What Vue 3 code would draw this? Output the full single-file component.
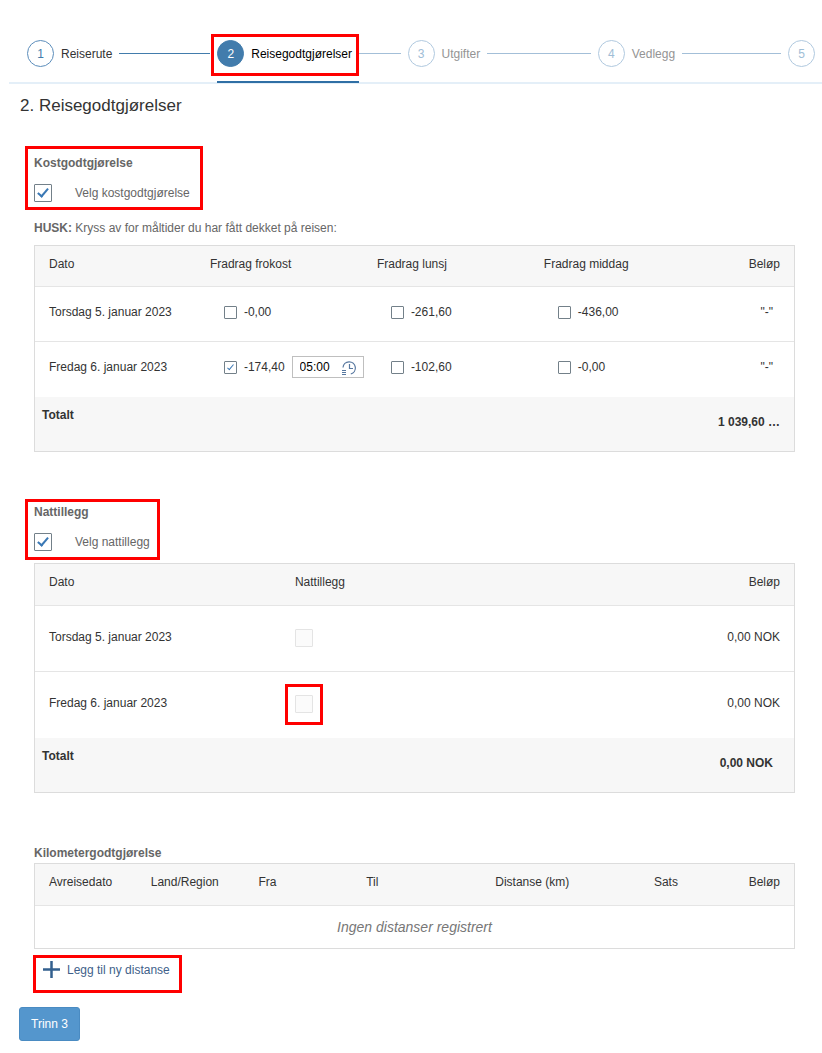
<template>
  <main class="page">
    <nav class="stepper" aria-label="Trinn">
      <div
        v-for="step in steps"
        :key="step.nr"
        class="step"
        :class="{ active: step.nr === current, upcoming: step.nr > current }"
      >
        <div class="step-head">
          <span class="step-nr">{{ step.nr }}</span>
          <span v-if="step.label" class="step-label">{{ step.label }}</span>
        </div>
        <span v-if="step.label" class="step-line"></span>
      </div>
    </nav>

    <h1>2. Reisegodtgjørelser</h1>

    <section class="block">
      <div class="choice marked mark-meals">
        <h2>Kostgodtgjørelse</h2>
        <label class="toggle">
          <input v-model="useMeals" type="checkbox" class="check" />
          <span>Velg kostgodtgjørelse</span>
        </label>
      </div>
      <p class="hint"><b>HUSK:</b> Kryss av for måltider du har fått dekket på reisen:</p>
      <table class="meals">
        <colgroup>
          <col class="w-date" />
          <col class="w-meal" />
          <col class="w-meal" />
          <col class="w-meal" />
          <col />
        </colgroup>
        <thead>
          <tr>
            <th>Dato</th>
            <th>Fradrag frokost</th>
            <th>Fradrag lunsj</th>
            <th>Fradrag middag</th>
            <th class="right">Beløp</th>
          </tr>
        </thead>
        <tbody>
          <tr v-for="day in mealDays" :key="day.date">
            <td>{{ day.date }}</td>
            <td v-for="meal in day.meals" :key="meal.name" class="meal">
              <div class="meal-cell">
                <label class="meal-label">
                  <input v-model="meal.checked" type="checkbox" class="check small" />
                  <span>{{ meal.amount }}</span>
                </label>
                <span v-if="meal.time" class="time">
                  <input v-model="meal.time" type="text" aria-label="Klokkeslett" />
                  <button type="button" aria-label="Velg klokkeslett">
                    <svg width="16" height="16" viewBox="0 0 16 16" fill="none">
                      <path d="M2 8.5A6.2 6.2 0 1 1 9.8 15" stroke="#57779f" stroke-width="1.2" />
                      <path d="M8.5 5V9.5H12" stroke="#57779f" stroke-width="1.2" />
                      <path d="M1 11.5H5M1 13.5H5M1 15.5H5" stroke="#57779f" />
                    </svg>
                  </button>
                </span>
              </div>
            </td>
            <td class="right inset">"-"</td>
          </tr>
        </tbody>
        <tfoot>
          <tr>
            <td colspan="4">Totalt</td>
            <td class="right">1 039,60 …</td>
          </tr>
        </tfoot>
      </table>
    </section>

    <section class="block">
      <div class="choice marked mark-night">
        <h2>Nattillegg</h2>
        <label class="toggle">
          <input v-model="useNight" type="checkbox" class="check" />
          <span>Velg nattillegg</span>
        </label>
      </div>
      <table class="nights">
        <colgroup>
          <col class="w-night" />
          <col class="w-night" />
          <col />
        </colgroup>
        <thead>
          <tr>
            <th>Dato</th>
            <th>Nattillegg</th>
            <th class="right">Beløp</th>
          </tr>
        </thead>
        <tbody>
          <tr v-for="night in nights" :key="night.date">
            <td>{{ night.date }}</td>
            <td>
              <span class="night-check" :class="{ 'marked mark-check': night.marked }">
                <input type="checkbox" class="check" disabled :aria-label="'Nattillegg ' + night.date" />
              </span>
            </td>
            <td class="right">0,00 NOK</td>
          </tr>
        </tbody>
        <tfoot>
          <tr>
            <td colspan="2">Totalt</td>
            <td class="right inset">0,00 NOK</td>
          </tr>
        </tfoot>
      </table>
    </section>

    <section class="block">
      <h2>Kilometergodtgjørelse</h2>
      <table class="distances">
        <colgroup>
          <col v-for="col in distanceCols" :key="col.label" :style="{ width: col.width + '%' }" />
        </colgroup>
        <thead>
          <tr>
            <th v-for="col in distanceCols" :key="col.label" :class="{ right: col.right }">{{ col.label }}</th>
          </tr>
        </thead>
        <tbody>
          <tr>
            <td :colspan="distanceCols.length" class="empty">Ingen distanser registrert</td>
          </tr>
        </tbody>
      </table>
      <button type="button" class="add marked mark-add">
        <svg width="17" height="17" viewBox="0 0 17 17">
          <path d="M8.5 0V17M0 8.5H17" stroke="#33608f" stroke-width="2.5" />
        </svg>
        <span>Legg til ny distanse</span>
      </button>
    </section>

    <button type="button" class="next">Trinn 3</button>
  </main>
</template>

<script setup>
import { ref } from 'vue'

const current = ref(2)
const useMeals = ref(true)
const useNight = ref(true)

const steps = [
  { nr: 1, label: 'Reiserute' },
  { nr: 2, label: 'Reisegodtgjørelser' },
  { nr: 3, label: 'Utgifter' },
  { nr: 4, label: 'Vedlegg' },
  { nr: 5 },
]

const mealDays = ref([
  {
    date: 'Torsdag 5. januar 2023',
    meals: [
      { name: 'frokost', amount: '-0,00', checked: false },
      { name: 'lunsj', amount: '-261,60', checked: false },
      { name: 'middag', amount: '-436,00', checked: false },
    ],
  },
  {
    date: 'Fredag 6. januar 2023',
    meals: [
      { name: 'frokost', amount: '-174,40', checked: true, time: '05:00' },
      { name: 'lunsj', amount: '-102,60', checked: false },
      { name: 'middag', amount: '-0,00', checked: false },
    ],
  },
])

const nights = [
  { date: 'Torsdag 5. januar 2023', marked: false },
  { date: 'Fredag 6. januar 2023', marked: true },
]

// bredder i prosent av tabellen
const distanceCols = [
  { label: 'Avreisedato', width: 13.4 },
  { label: 'Land/Region', width: 14.2 },
  { label: 'Fra', width: 14.2 },
  { label: 'Til', width: 17 },
  { label: 'Distanse (km)', width: 20.9 },
  { label: 'Sats', width: 10.3 },
  { label: 'Beløp', width: 10, right: true },
]
</script>

<style>
body {
  margin: 0;
  background: #fff;
}
</style>

<style scoped>
.page {
  font-family: "Liberation Sans", Arial, sans-serif;
  font-size: 12px;
  line-height: 16px;
  color: #333;
  padding-bottom: 12px;
}

button,
input {
  font: inherit;
  margin: 0;
}

/* stepper */
.stepper {
  display: flex;
  box-sizing: border-box;
  height: 84px;
  margin-left: 9px;
  padding: 40px 7px 0 18px;
  border-bottom: 2px solid #e4eff8;
}

.step {
  display: flex;
  flex: 1;
  align-items: center;
  height: 27px;
}

.step:last-child {
  flex: none;
}

.step-head {
  position: relative;
  display: flex;
  align-items: center;
  gap: 7px;
}

.step-nr {
  box-sizing: border-box;
  width: 27px;
  height: 27px;
  border: 1px solid #5b8dbb;
  border-radius: 50%;
  line-height: 26px;
  text-align: center;
  color: #427cac;
}

.step-line {
  flex: 1;
  height: 1px;
  margin: 0 7px;
  background: #427cac;
}

.active .step-nr {
  background: #427cac;
  border-color: #427cac;
  color: #fff;
}

.active .step-label {
  color: #000;
}

.active .step-line,
.upcoming .step-line {
  background: #a3bfd8;
}

.upcoming .step-nr {
  border-color: #b0c9df;
  color: #a0bdd6;
}

.upcoming .step-label {
  color: #949494;
}

.active .step-head::before {
  content: "";
  position: absolute;
  inset: -6px -7px -9px -6px;
  border: 3px solid #f00;
}

.active .step-head::after {
  content: "";
  position: absolute;
  top: 41px;
  left: 0;
  right: -7px;
  height: 2px;
  background: #2f6fa5;
}

/* headings */
h1 {
  margin: 10px 0 37px 20px;
  font-size: 17px;
  font-weight: normal;
  line-height: 24px;
}

h2 {
  margin: 0;
  font-size: 12px;
  line-height: 16px;
  color: #666;
}

.block {
  margin: 0 27px 52px 34px;
}

.block:last-of-type {
  margin-bottom: 29px;
}

.choice {
  width: fit-content;
  margin-bottom: 12px;
}

.toggle {
  display: flex;
  align-items: center;
  gap: 23px;
  margin-top: 13px;
  color: #666;
}

.hint {
  margin: 18px 0 9px;
  color: #666;
}

/* red frames */
.marked {
  position: relative;
}

.marked::before {
  content: "";
  position: absolute;
  border: 3px solid #f00;
}

.mark-meals::before {
  inset: -9px -13px -8px -9px;
}

.mark-night::before {
  inset: -5px -10px -9px -9px;
}

.mark-check::before {
  inset: -11px -10px -12px;
}

.mark-add::before {
  inset: -6px -12px -15px -10px;
}

/* checkboxes */
.check {
  appearance: none;
  box-sizing: border-box;
  display: grid;
  place-items: center;
  width: 18px;
  height: 18px;
  border: 1px solid #738089;
  border-radius: 1px;
  background: #fff;
}

.check:checked::after {
  content: "";
  width: 4px;
  height: 9px;
  margin-bottom: 3px;
  border: solid #3a78b5;
  border-width: 0 2px 2px 0;
  transform: rotate(40deg);
}

.check.small {
  width: 13px;
  height: 13px;
}

.check.small:checked::after {
  width: 2px;
  height: 6px;
  margin-bottom: 2px;
  border-width: 0 1px 1px 0;
}

.check:disabled {
  border-color: #e4e4e4;
  background: #fbfbfb;
}

/* tables */
table {
  width: 100%;
  table-layout: fixed;
  border: 1px solid #dcdcdc;
  border-collapse: separate;
  border-spacing: 0;
}

th,
td {
  box-sizing: border-box;
  padding: 10px 14px 0;
  font-weight: normal;
  text-align: left;
  vertical-align: top;
  white-space: nowrap;
}

th {
  height: 42px;
  background: #f7f7f7;
}

th,
tbody tr:not(:last-child) td {
  border-bottom: 1px solid #e5e5e5;
}

.right {
  text-align: right;
}

td.inset {
  padding-right: 21px;
}

tfoot td {
  height: 54px;
  padding-left: 7px;
  background: #f7f7f7;
  font-weight: bold;
}

tfoot td.right {
  padding-top: 17px;
}

.w-date {
  width: 21.2%;
}

.w-meal {
  width: 22%;
}

.w-night {
  width: 32.4%;
}

.meals th {
  height: 41px;
}

.meals tbody td {
  height: 55px;
  padding-top: 17px;
}

.meal-cell {
  display: flex;
  align-items: center;
  gap: 7px;
  height: 16px;
  padding-left: 14px;
}

.meal-label {
  display: flex;
  align-items: center;
  gap: 7px;
}

.time {
  display: flex;
  align-items: center;
  box-sizing: border-box;
  width: 72px;
  height: 22px;
  border: 1px solid #bfbfbf;
  background: #fff;
}

.time input {
  flex: 1;
  min-width: 0;
  padding: 0 0 0 7px;
  border: 0;
  background: none;
  color: #000;
}

.time button {
  padding: 0 6px 0 0;
  border: 0;
  background: none;
}

.time svg {
  display: block;
}

.nights tbody td {
  height: 66px;
  padding-top: 23px;
}

.night-check {
  display: block;
  width: 18px;
}

td.empty {
  height: 42px;
  padding-top: 13px;
  font-size: 14px;
  font-style: italic;
  text-align: center;
  color: #777;
}

.distances {
  margin-top: 2px;
}

.add {
  display: flex;
  align-items: center;
  gap: 7px;
  margin: 12px 0 0 9px;
  padding: 0;
  border: 0;
  background: none;
  color: #3f5f8a;
}

.next {
  display: block;
  height: 34px;
  margin-left: 19px;
  padding: 0 11px;
  border: 1px solid #4a8bc2;
  border-radius: 3px;
  background: #5496cd;
  color: #fff;
}
</style>
